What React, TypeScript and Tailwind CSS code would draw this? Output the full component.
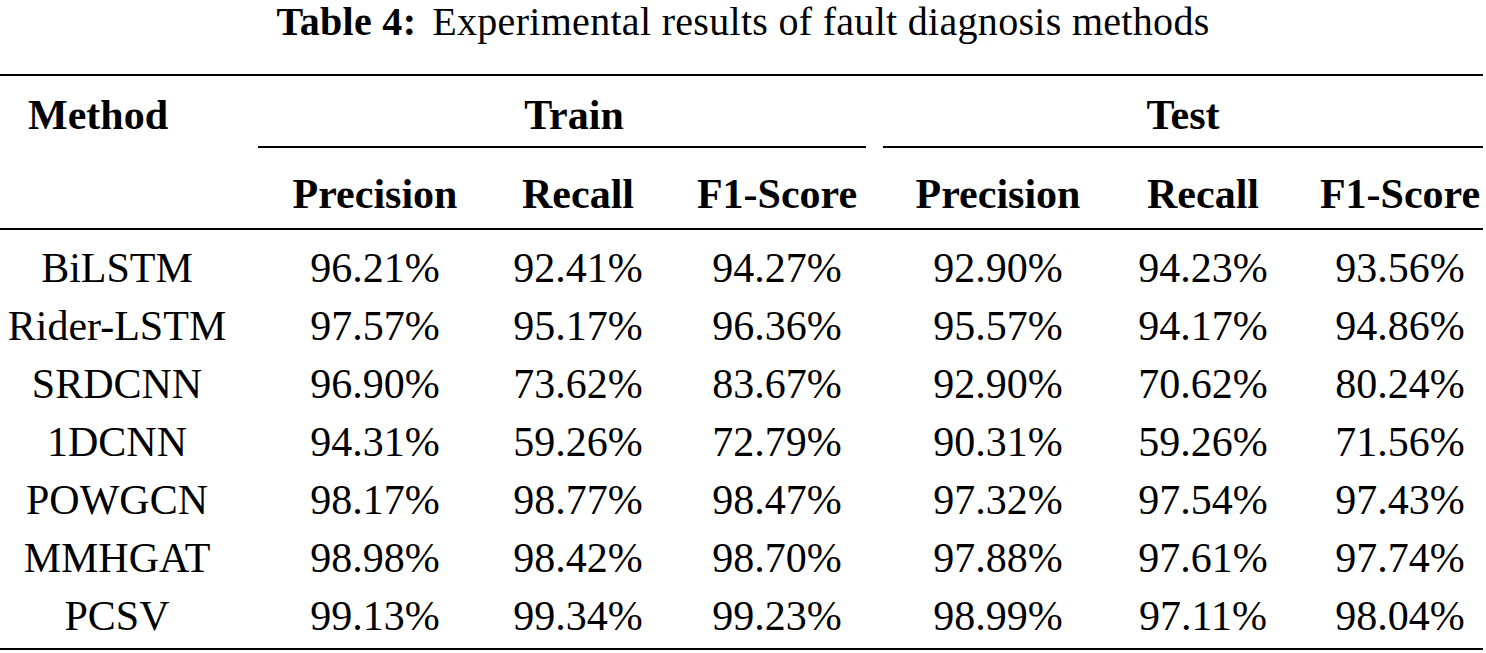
import React from "react";

const rows = [
  ["BiLSTM", "96.21%", "92.41%", "94.27%", "92.90%", "94.23%", "93.56%"],
  ["Rider-LSTM", "97.57%", "95.17%", "96.36%", "95.57%", "94.17%", "94.86%"],
  ["SRDCNN", "96.90%", "73.62%", "83.67%", "92.90%", "70.62%", "80.24%"],
  ["1DCNN", "94.31%", "59.26%", "72.79%", "90.31%", "59.26%", "71.56%"],
  ["POWGCN", "98.17%", "98.77%", "98.47%", "97.32%", "97.54%", "97.43%"],
  ["MMHGAT", "98.98%", "98.42%", "98.70%", "97.88%", "97.61%", "97.74%"],
  ["PCSV", "99.13%", "99.34%", "99.23%", "98.99%", "97.11%", "98.04%"],
];

const cols = "grid grid-cols-[234px_282px_124px_274px_168px_242px_152px]";

export default function App() {
  return (
    <div className="w-[1486px] h-[653px] bg-white text-black font-['Liberation_Serif',serif] overflow-hidden">
      <div className="h-[44px] leading-[44px] text-[40px] tracking-[0.3px] text-center whitespace-nowrap">
        <span className="font-bold">Table 4:</span>
        <span className="ml-[16px]">Experimental results of fault diagnosis methods</span>
      </div>

      <div className="w-[1483px] mt-[30px]">
        <div className="h-[2px] bg-black" />

        <div className="flex h-[58px] leading-[58px] text-[42px] font-bold mt-[10px] whitespace-nowrap">
          <div className="w-[234px] pl-[28px]">Method</div>
          <div className="w-[680px] text-center">Train</div>
          <div className="w-[538px] text-center">Test</div>
        </div>

        <div className="flex mt-[2px]">
          <div className="ml-[258px] w-[608px] h-[1.5px] bg-black" />
          <div className="ml-[17px] w-[600px] h-[1.5px] bg-black" />
        </div>

        <div className={`${cols} h-[58px] leading-[58px] text-[42px] font-bold mt-[17px]`}>
          <div />
          {["Precision", "Recall", "F1-Score", "Precision", "Recall", "F1-Score"].map((h, i) => (
            <div key={i} className="flex justify-center whitespace-nowrap">
              {h}
            </div>
          ))}
        </div>

        <div className="h-[2px] bg-black mt-[5px]" />

        <div className="mt-[9px]">
          {rows.map((r, i) => (
            <div key={i} className={`${cols} h-[58px] leading-[58px] text-[42px]`}>
              {r.map((c, j) => (
                <div key={j} className="flex justify-center whitespace-nowrap">
                  {c}
                </div>
              ))}
            </div>
          ))}
        </div>

        <div className="h-[2.5px] bg-black mt-[3px]" />
      </div>
    </div>
  );
}
